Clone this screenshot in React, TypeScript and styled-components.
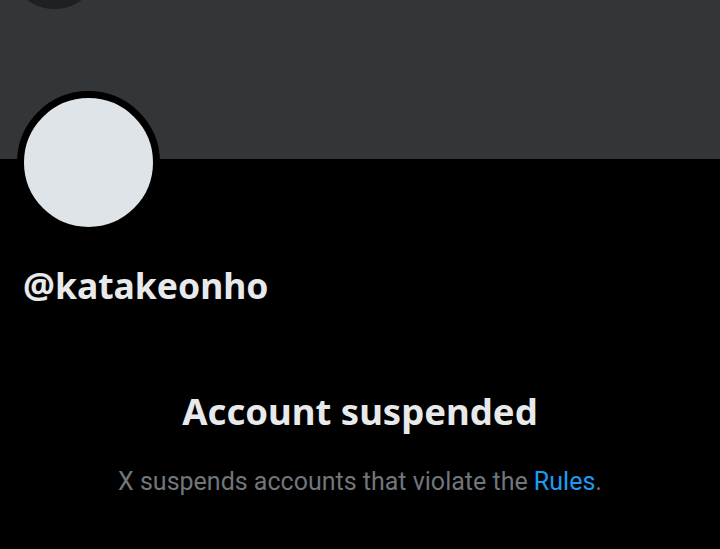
import * as React from "react";
import styled, { createGlobalStyle } from "styled-components";

const GlobalStyle = createGlobalStyle`
  html, body {
    margin: 0;
    padding: 0;
    background: #000;
  }
  body {
    width: 720px;
    height: 549px;
    overflow: hidden;
  }
`;

const Page = styled.div`
  position: relative;
  width: 720px;
  height: 549px;
  background: #000;
  overflow: hidden;
  font-family: "Noto Sans", "Open Sans", sans-serif;
`;

const Banner = styled.div`
  height: 159px;
  background: #333639;
`;

// back button circle, mostly cut off by the top edge
const BackButton = styled.div`
  position: absolute;
  left: 8px;
  top: -84px;
  width: 93px;
  height: 93px;
  border-radius: 50%;
  background: #1e2022;
`;

const ProfileHead = styled.div`
  padding-left: 17px;
  margin-top: -68px;
`;

const Avatar = styled.div`
  width: 129px;
  height: 129px;
  border-radius: 50%;
  border: 7px solid #000;
  background: #dfe4e8;
`;

const Handle = styled.div`
  margin: 31px 0 0 23px;
  color: #e7e9ea;
  font-size: 35.5px;
  font-weight: 700;
  line-height: 40px;
`;

const Notice = styled.div`
  display: flex;
  flex-direction: column;
  align-items: center;
  margin-top: 84px;
`;

const Title = styled.h2`
  margin: 0;
  color: #e7e9ea;
  font-size: 36.5px;
  font-weight: 700;
  line-height: 44px;
`;

const Subtitle = styled.p`
  margin: 34px 0 0;
  color: #71767b;
  font-family: Roboto, "Liberation Sans", sans-serif;
  font-size: 25px;
  line-height: 30px;
`;

const RulesLink = styled.a`
  color: #1d9bf0;
  text-decoration: none;
`;

export default function App() {
  return (
    <Page>
      <GlobalStyle />
      <Banner />
      <BackButton />
      <ProfileHead>
        <Avatar />
      </ProfileHead>
      <Handle>@katakeonho</Handle>
      <Notice>
        <Title>Account suspended</Title>
        <Subtitle>
          X suspends accounts that violate the <RulesLink href="#">Rules</RulesLink>.
        </Subtitle>
      </Notice>
    </Page>
  );
}
